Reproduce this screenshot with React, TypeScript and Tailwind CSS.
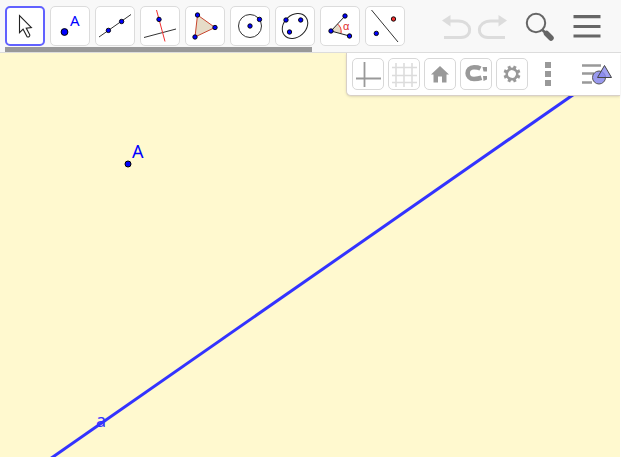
import type { ReactNode } from "react";

const INK = "#333333";
const BLUE = "#0000ff";

function Dot({ x, y, fill = BLUE }: { x: number; y: number; fill?: string }) {
  return <circle cx={x} cy={y} r="2.2" fill={fill} stroke="#000" strokeWidth="0.9" />;
}

const TOOLS: { title: string; icon: ReactNode }[] = [
  {
    title: "Move",
    icon: (
      <path
        d="M14.5 9.5v17.2l3.6-3.5 4 7.6q2.4.8 2.8-1.8l-3.7-6.9 5.2-.6Z"
        fill="#fff"
        stroke="#222"
        strokeWidth="1.1"
      />
    ),
  },
  {
    title: "Point",
    icon: (
      <>
        <circle cx="14.5" cy="26" r="3.4" fill={BLUE} stroke="#000" />
        <text x="20" y="20" fill={BLUE} className="font-['Noto_Sans',sans-serif] text-[15px]">
          A
        </text>
      </>
    ),
  },
  {
    title: "Line",
    icon: (
      <>
        <path d="M4 31 36 8.5" stroke={INK} />
        <Dot x={13.4} y={24.4} />
        <Dot x={26.6} y={15.5} />
      </>
    ),
  },
  {
    title: "Perpendicular Line",
    icon: (
      <>
        <path d="M4 31.5 36 23" stroke={INK} />
        <path d="M16.5 4 25 35.5" stroke="#f03030" />
        <Dot x={19} y={13.4} />
      </>
    ),
  },
  {
    title: "Polygon",
    icon: (
      <>
        <path d="M12.5 9 30 21.5 10 31Z" fill="#e6dcc8" stroke="#c8452e" />
        <Dot x={12.5} y={9} />
        <Dot x={30} y={21.5} />
        <Dot x={10} y={31} />
      </>
    ),
  },
  {
    title: "Circle with Center",
    icon: (
      <>
        <circle cx="20" cy="20" r="11.5" stroke={INK} />
        <Dot x={20} y={20} />
        <Dot x={29.5} y={13.4} />
      </>
    ),
  },
  {
    title: "Conic",
    icon: (
      <>
        <ellipse cx="20" cy="20" rx="14" ry="11" transform="rotate(-42 20 20)" stroke="#222" />
        <Dot x={11} y={14} />
        <Dot x={25.7} y={14} />
        <Dot x={14.5} y={26} />
      </>
    ),
  },
  {
    title: "Angle",
    icon: (
      <>
        <path d="M11 25 18 18q4 4 3 9.5Z" fill="#e6dcc8" />
        <path d="M17.5 18q4.500 3.500 3.500 9.500" stroke="#f03030" />
        <path d="M25 10 11 25 29.500 30" stroke="#222" />
        <Dot x={25} y={10} />
        <Dot x={11} y={25} />
        <Dot x={29.5} y={30} />
        <text x="23" y="24" fill="#e03030" className="text-[11px]">
          α
        </text>
      </>
    ),
  },
  {
    title: "Reflect about Line",
    icon: (
      <>
        <path d="M6.5 4 33 36" stroke={INK} />
        <Dot x={28.5} y={13} fill="#f03030" />
        <Dot x={11.3} y={27.4} />
      </>
    ),
  },
];

const VIEW_BUTTONS: { title: string; icon: ReactNode }[] = [
  {
    title: "Axes",
    icon: <path d="M11.5 3v25M3 19.5h25" stroke="#999" strokeWidth="1.8" />,
  },
  {
    title: "Grid",
    icon: (
      <path
        d="M7 4v24M15 4v24M23 4v24M3 8.5h25M3 16.5h25M3 23.5h25"
        stroke="#dcdcdc"
        strokeWidth="1.6"
      />
    ),
  },
  {
    title: "Home",
    icon: <path d="M15 7 24 15.5h-2.500v8h-4.500v-6h-4v6H8.500v-8H6Z" fill="#999" />,
  },
  {
    title: "Snap",
    icon: (
      <>
        <path
          d="M19.5 9.5Q17 8.300 13 8.300C4.500 8.300 4.500 20 13 20Q17 20 20.500 18.800"
          stroke="#999"
          strokeWidth="4.6"
        />
        <path d="m21.500 8 4.500 0v4.500h-3.500ZM22 17h4v3.500l-3.500 1.500Z" fill="#999" />
      </>
    ),
  },
  {
    title: "Settings",
    icon: (
      <g transform="rotate(22.5 15 15)">
        <circle cx="15" cy="15" r="5.2" stroke="#999" strokeWidth="2.6" />
        <path
          d="M15 9.500V6.500M15 20.500v3M9.500 15H6.500M20.500 15h3M11 11 9 9M19 11 21 9M11 19 9 21M19 19 21 21"
          stroke="#999"
          strokeWidth="3"
        />
      </g>
    ),
  },
];

function ToolBar() {
  return (
    <div>
      <div className="flex gap-[5px] pt-[6px] pl-[5px]">
        {TOOLS.map(({ title, icon }, i) => (
          <button
            key={title}
            type="button"
            aria-label={title}
            className={
              i === 0
                ? "h-10 w-10 shrink-0 rounded-[5px] border-2 border-[#6161ff] bg-white"
                : "h-10 w-10 shrink-0 rounded-[5px] border border-[#dcdcdc] bg-white"
            }
          >
            <svg
              viewBox="0 0 40 40"
              fill="none"
              className={i === 0 ? "-m-[2px] h-10 w-10" : "-m-px h-10 w-10"}
            >
              {icon}
            </svg>
          </button>
        ))}
      </div>
      <div className="mt-px ml-[5px] h-[5px] w-[307px] bg-[#999]" />
    </div>
  );
}

function HeaderActions() {
  return (
    <div className="ml-auto flex items-start pt-3 pr-5">
      <button type="button" aria-label="Undo">
        <svg width="36" height="30" fill="none">
          <path d="M10 9h9c15 0 15 16.500 3 16.500H5" stroke="#dcdcdc" strokeWidth="3" />
          <path d="M3 8.500 11.500 3v11.500Z" fill="#dcdcdc" />
        </svg>
      </button>
      <button type="button" aria-label="Redo">
        <svg width="36" height="30" fill="none">
          <path d="M25 9h-9c-15 0-15 16.500-3 16.500H30" stroke="#dcdcdc" strokeWidth="3" />
          <path d="M32 8.500 23.500 3v11.500Z" fill="#dcdcdc" />
        </svg>
      </button>
      <button type="button" aria-label="Search" className="ml-3">
        <svg width="36" height="30" fill="none">
          <circle cx="13" cy="11" r="9.2" stroke="#666" strokeWidth="2" />
          <path d="m19.500 18 4 4" stroke="#666" strokeWidth="2.5" />
          <path d="m23.500 21.500 4.500 4.500" stroke="#666" strokeWidth="5.5" strokeLinecap="round" />
        </svg>
      </button>
      <button type="button" aria-label="Menu" className="ml-[14px]">
        <svg width="28" height="30">
          <path d="M.5 3h27v3.200H.5zM.5 13h27v3H.5zM.5 22.500h27v3H.5z" fill="#666" />
        </svg>
      </button>
    </div>
  );
}

function StyleBar() {
  return (
    <div className="absolute top-0 right-px flex items-center gap-1 rounded-bl-[5px] border-b border-l border-[#d8d0c8] bg-white py-[5px] pr-[7px] pl-[5px] shadow-sm">
      {VIEW_BUTTONS.map(({ title, icon }) => (
        <button
          key={title}
          type="button"
          aria-label={title}
          className="h-8 w-8 rounded-[5px] border border-[#d8d8d8] bg-white"
        >
          <svg width="30" height="30" viewBox="0 0 30 30" fill="none">
            {icon}
          </svg>
        </button>
      ))}
      <button type="button" aria-label="More">
        <svg width="32" height="32">
          <path d="M13 4h6v6h-6zM13 13h6v6h-6zM13 22h6v6h-6z" fill="#999" />
        </svg>
      </button>
      <button type="button" aria-label="Algebra view">
        <svg width="45" height="32" fill="none">
          <path d="M14 7.500h19M14 15.500h12M14 24.500h10" stroke="#999" strokeWidth="2.5" />
          <circle cx="31" cy="19.5" r="6.5" fill="#9999ee" stroke="#555" />
          <path d="M36.500 7.500 43.500 19.500h-14Z" fill="#8888ee" fillOpacity="0.8" stroke="#444" />
        </svg>
      </button>
    </div>
  );
}

function GraphicsView() {
  return (
    <main className="relative flex-1 overflow-hidden bg-white pr-px pb-[2px]">
      <div className="relative h-full min-h-[404px] overflow-hidden bg-[#fff9cf]">
        <svg className="absolute inset-0 h-full w-full font-['Noto_Sans',sans-serif]">
          <path d="M9 434.500 641 -5.500" stroke="#3333ff" strokeWidth="3" />
          <circle cx="128" cy="111" r="3" fill={BLUE} stroke="#000" />
          <text x="132" y="105" fill={BLUE} className="text-lg">
            A
          </text>
          <text x="96" y="374" fill="#3333ff" className="text-lg">
            a
          </text>
        </svg>
      </div>
      <StyleBar />
    </main>
  );
}

export default function App() {
  return (
    <div className="flex min-h-screen flex-col bg-white font-['Liberation_Sans',sans-serif]">
      <header className="flex h-[53px] border-b border-[#dcdcdc] bg-[#f8f8f8]">
        <ToolBar />
        <HeaderActions />
      </header>
      <GraphicsView />
    </div>
  );
}
